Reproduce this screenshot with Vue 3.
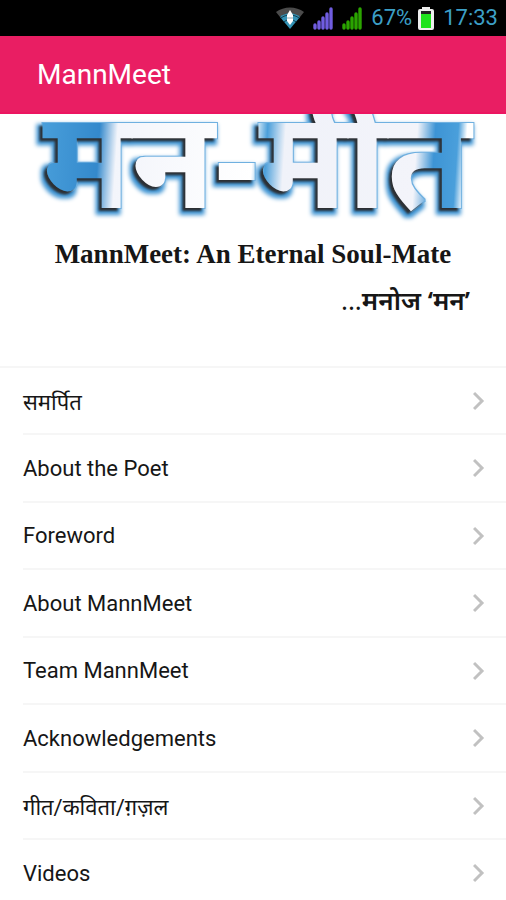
<template>
  <div class="app">
    <!-- status bar -->
    <div class="status-bar">
      <svg class="wifi" viewBox="0 0 28 22" width="28" height="22">
        <path d="M0 5C8-1 20-1 28 5L24 10C18 6 10 6 4 10Z" fill="#4b4b4b" />
        <path d="M4 10C10 5 18 5 24 10L14 22Z" fill="#3392b5" />
        <path d="M5 11C10 7 18 7 23 11M8 15C11 12 17 12 20 15" fill="none" stroke="#123e50" stroke-width="1" />
        <path d="M14 3L17 8V14L14 18L11 14V8Z" fill="#fff" />
        <path d="M11 11H17" stroke="#8fa9b3" stroke-width="1" />
      </svg>
      <svg
        v-for="color in signals"
        :key="color"
        class="signal"
        viewBox="0 0 20 23"
        width="20"
        height="23"
      >
        <g :stroke="color" stroke-width="3.4" stroke-linecap="round">
          <path d="M2 18V21M6 15V21M10 11V21M14 7V21M18 2V21" />
        </g>
      </svg>
      <span class="percent">67%</span>
      <svg class="battery" viewBox="0 0 16 25" width="16" height="25">
        <path d="M4 1H12V3H14Q16 3 16 5V22Q16 24 14 24H2Q0 24 0 22V5Q0 3 2 3H4Z" fill="#eee" />
        <rect x="3" y="5" width="10" height="17" fill="#222" />
        <rect x="3" y="8" width="10" height="14" fill="#1fe31c" />
      </svg>
      <time class="clock">17:33</time>
    </div>

    <header class="toolbar">
      <h1>MannMeet</h1>
    </header>

    <!-- banner -->
    <section class="banner">
      <svg class="logo" viewBox="0 0 506 120">
        <defs>
          <linearGradient id="sky" gradientUnits="userSpaceOnUse" x1="28" y1="0" x2="480" y2="30">
            <stop offset="0" stop-color="#4ea4de" />
            <stop offset="0.16" stop-color="#3489cc" />
            <stop offset="0.2" stop-color="#f3f5fb" />
            <stop offset="0.5" stop-color="#fff" />
            <stop offset="0.53" stop-color="#4b9fda" />
            <stop offset="0.57" stop-color="#f0f2f9" />
            <stop offset="0.86" stop-color="#f3f4fa" />
            <stop offset="0.9" stop-color="#3d94d5" />
            <stop offset="0.95" stop-color="#4a9fdb" />
            <stop offset="0.97" stop-color="#fff" />
          </linearGradient>
          <filter id="emboss" x="-5%" y="-10%" width="110%" height="120%" color-interpolation-filters="sRGB">
            <!-- blue glow to the lower left -->
            <feMorphology in="SourceAlpha" operator="dilate" radius="3" result="wide" />
            <feOffset in="wide" dx="-3" dy="4" result="wideMoved" />
            <feGaussianBlur in="wideMoved" stdDeviation="2" result="wideSoft" />
            <feFlood flood-color="#3b92d2" />
            <feComposite in2="wideSoft" operator="in" result="glow" />
            <!-- thin outline -->
            <feMorphology in="SourceAlpha" operator="dilate" radius="1" result="edge" />
            <feFlood flood-color="#6fb0e0" />
            <feComposite in2="edge" operator="in" result="outline" />
            <!-- dark bevel -->
            <feOffset in="SourceAlpha" dx="-3" dy="3" result="bodyMoved" />
            <feGaussianBlur in="bodyMoved" stdDeviation="1" result="bodySoft" />
            <feFlood flood-color="#2c2f33" />
            <feComposite in2="bodySoft" operator="in" result="bevel" />
            <feMerge>
              <feMergeNode in="glow" />
              <feMergeNode in="outline" />
              <feMergeNode in="bevel" />
              <feMergeNode in="SourceGraphic" />
            </feMerge>
          </filter>
        </defs>
        <text class="logo-text" x="257" y="94" text-anchor="middle" filter="url(#emboss)">मन-मीत</text>
      </svg>
      <h2 class="tagline">MannMeet: An Eternal Soul-Mate</h2>
      <p class="author"><span class="dots">...</span>मनोज ‘मन’</p>
    </section>

    <!-- menu -->
    <nav>
      <ul class="menu">
        <li v-for="item in items" :key="item">
          <a href="#">
            <span>{{ item }}</span>
            <svg viewBox="0 0 12 20" width="12" height="20">
              <path d="M1 2L9 10L1 18" fill="none" stroke="#c1c1c1" stroke-width="3" />
            </svg>
          </a>
        </li>
      </ul>
    </nav>
  </div>
</template>

<script setup>
import { ref } from "vue";

const signals = ["#705de0", "#2ba500"];

const items = ref([
  "समर्पित",
  "About the Poet",
  "Foreword",
  "About MannMeet",
  "Team MannMeet",
  "Acknowledgements",
  "गीत/कविता/ग़ज़ल",
  "Videos",
]);
</script>

<style>
body {
  margin: 0;
  background: #fff;
}
</style>

<style scoped>
* {
  box-sizing: border-box;
  margin: 0;
  padding: 0;
}

.app {
  font-family: Roboto, "Noto Sans", sans-serif;
  color: #161616;
}

.status-bar {
  display: flex;
  align-items: center;
  justify-content: flex-end;
  height: 36px;
  padding-right: 8px;
  background: #000;
  color: #3c9fc6;
  font-size: 22px;
  line-height: 36px;
}

.wifi {
  margin-right: 9px;
}

.signal {
  margin-right: 9px;
}

.battery {
  margin: 0 9px 0 6px;
}

.toolbar {
  display: flex;
  align-items: center;
  height: 78px;
  padding: 0 37px;
  background: #e91e63;
  border-bottom: 2px solid #ec1561;
  color: #fff;
}

.toolbar h1 {
  font-size: 28px;
  font-weight: 400;
}

.banner {
  padding-bottom: 40px;
}

.logo {
  display: block;
  width: 100%;
}

.logo-text {
  font-family: "Noto Sans", sans-serif;
  font-size: 136px;
  font-weight: 700;
  fill: url(#sky);
}

.tagline {
  font-family: "Liberation Serif", serif;
  font-size: 27px;
  font-weight: 700;
  line-height: 40px;
  text-align: center;
  white-space: nowrap;
}

.author {
  padding-right: 36px;
  font-family: "Noto Sans", sans-serif;
  font-size: 26px;
  font-weight: 600;
  line-height: 52px;
  text-align: right;
}

.dots {
  font-weight: 400;
}

.menu {
  list-style: none;
  border-top: 2px solid #f6f6f6;
}

.menu li {
  height: 67px;
  padding-left: 23px;
}

.menu li:nth-child(even) {
  height: 68px;
}

.menu a {
  display: flex;
  align-items: center;
  justify-content: space-between;
  height: 100%;
  padding-right: 21px;
  border-bottom: 2px solid #f6f6f6;
  color: inherit;
  font-size: 22px;
  text-decoration: none;
}
</style>
